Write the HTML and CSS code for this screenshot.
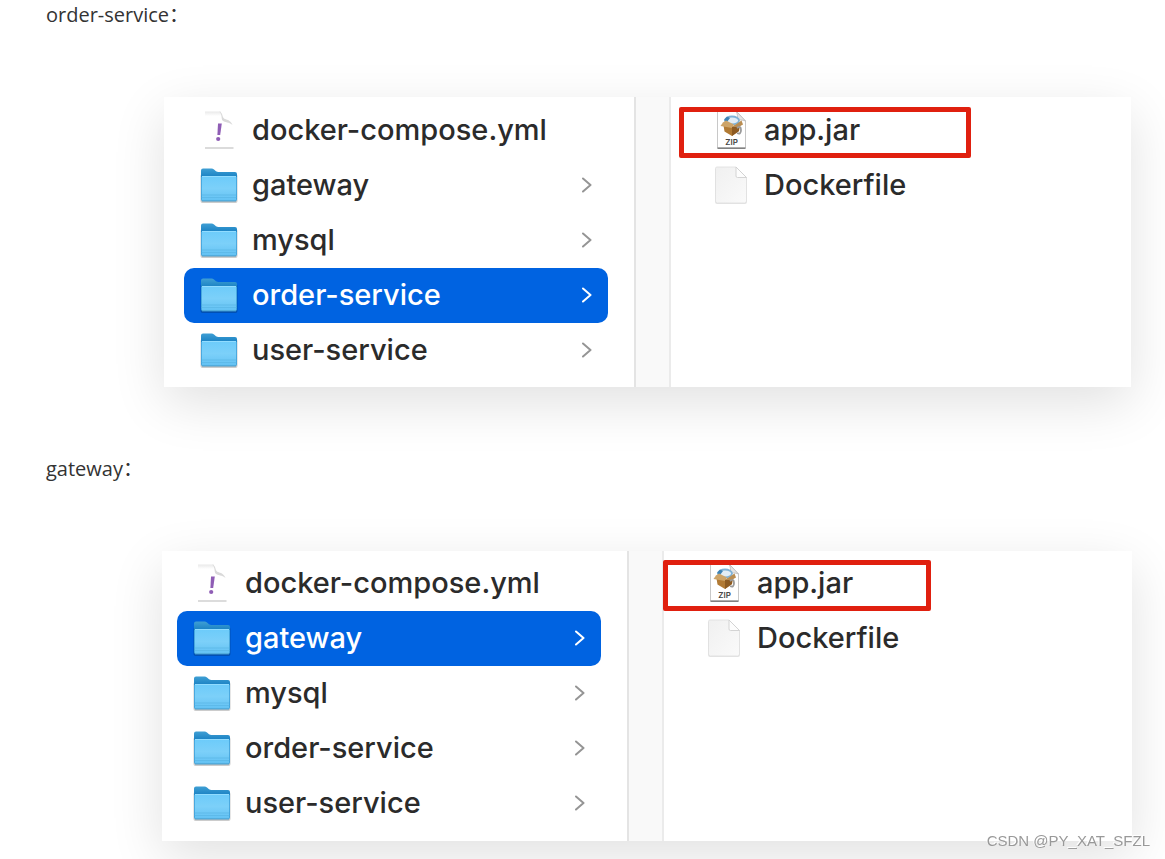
FILE: index.html
```
<!DOCTYPE html>
<html lang="zh-CN">
<head>
  <meta charset="UTF-8">
  <title>order-service / gateway</title>
  <meta name="viewport" content="width=device-width,initial-scale=1">
  <link rel="stylesheet" href="styles.css">
</head>
<body>
  <!-- shared icons -->
  <svg class="sprite" width="0" height="0" aria-hidden="true">
    <defs>
      <linearGradient id="folder-back" x1="0" y1="0" x2="0" y2="1">
        <stop offset="0" stop-color="#3f9fd4"/>
        <stop offset="0.25" stop-color="#1c83c4"/>
      </linearGradient>
      <linearGradient id="folder-front" x1="0" y1="0" x2="0" y2="1">
        <stop offset="0" stop-color="#6ccbfa"/>
        <stop offset="0.5" stop-color="#7cd0f9"/>
        <stop offset="1" stop-color="#62c1f3"/>
      </linearGradient>
      <linearGradient id="paper" x1="0" y1="0" x2="1" y2="1">
        <stop offset="0" stop-color="#f0f0f0"/>
        <stop offset="1" stop-color="#fafafa"/>
      </linearGradient>
      <linearGradient id="top-shade" x1="0" y1="0" x2="0" y2="1">
        <stop offset="0" stop-color="#e9e9e9"/>
        <stop offset="1" stop-color="#ffffff"/>
      </linearGradient>
    </defs>
    <symbol id="i-folder" viewBox="0 0 40 40">
      <rect x="0.500" y="9" width="37" height="29" rx="2" fill="#000" opacity="0.2"/>
      <path d="M1 5.500Q1 3.500 3 3.500H11.500Q13 3.500 14 4.500L16 6.200Q17 7 18.500 7H35Q37 7 37 9V34Q37 36 35 36H3Q1 36 1 34Z" fill="url(#folder-back)"/>
      <path d="M1.500 12.500Q1.500 11 3 11H35Q36.500 11 36.500 12.500V34.500Q36.500 36 35 36H3Q1.500 36 1.500 34.500Z" fill="url(#folder-front)"/>
      <path d="M2 11.500H36" stroke="#91dcff" stroke-width="1"/>
      <path d="M1.500 30H36.500M1.500 32.500H36.500" stroke="#55b2e3" stroke-width="0.600"/>
      <path d="M2 36H36" stroke="#4396c4" stroke-width="1"/>
    </symbol>
    <symbol id="i-yml" viewBox="0 0 40 40">
      <path d="M5 1H20L33 15V38H5Z" fill="#fff"/>
      <path d="M5 1.500H21V6H5Z" fill="url(#top-shade)"/>
      <path d="M19 1.500C23 2.500 22 7 24 8.500C26 10 30 9 32.500 15C29 11.500 25 13 22.500 10.500C21 9 22.500 4 19 1.500Z" fill="#d9d9d9"/>
      <path d="M5 38H33.500" stroke="#c4c4c4" stroke-width="1.200"/>
      <path d="M18 13.500L21.800 13.500L20.200 25H17.400Z" fill="#8f5db5"/>
      <circle cx="18.200" cy="29" r="2.100" fill="#8f5db5"/>
    </symbol>
    <symbol id="i-zip" viewBox="0 0 40 40">
      <path d="M5.500 1H24L33.500 11V38H5.500Z" fill="#fff" stroke="#c8c8c8" stroke-width="1"/>
      <path d="M24 1L33.500 11C30 9.500 27 10 25 10.500C26 7 25.500 4 24 1Z" fill="#e4e4e4" stroke="#b5b5b5" stroke-width="0.700"/>
      <path d="M5.500 38.200H33.500" stroke="#777" stroke-width="1.400"/>
      <ellipse cx="20" cy="10.500" rx="7" ry="4" fill="#e2edf5" stroke="#7fb2d6" stroke-width="1.800"/>
      <path d="M12 10L15 6.500L18 8L15 12Z" fill="#3e83b5"/>
      <path d="M11 12.500L20 16.500L29 12.500L27 21L20 26L12.500 21.500Z" fill="#b17a34"/>
      <path d="M11 12.500L14 10.500L22 14.500L20 18L8.500 16Z" fill="#cda468"/>
      <path d="M20 17L29.500 10.500L31 14.500L23 19Z" fill="#b98d52"/>
      <path d="M20 17V26L27 21V17Z" fill="#8d5b22"/>
      <path d="M25 18Q29 15 29 20T25 23" fill="none" stroke="#9a9a9a" stroke-width="1.800"/>
    </symbol>
    <symbol id="i-file" viewBox="0 0 40 40">
      <path d="M4.500 3H24L35 14V37Q35 39 33 39H5Q3 39 3 37V4.500Q3 3 4.500 3Z" fill="#000" opacity="0.1"/>
      <path d="M5 2H24L34.500 12.500V36Q34.500 38 32.500 38H5.500Q3.500 38 3.500 36V3.500Q3.500 2 5 2Z" fill="url(#paper)" stroke="#dedede" stroke-width="0.800"/>
      <path d="M24 2L34.500 12.500H25.500Q24 12.500 24 11Z" fill="#fdfdfd" stroke="#cfcfcf" stroke-width="0.900"/>
    </symbol>
    <symbol id="i-chevron" viewBox="0 0 10 16">
      <path d="M1 1.500L8.500 8L1 14.500" fill="none" stroke="currentColor" stroke-width="2" stroke-linecap="round" stroke-linejoin="round"/>
    </symbol>
  </svg>

  <main class="article">
    <section class="block">
      <p class="title">order-service：</p>
      <div class="finder finder-order">
        <div class="col">
          <button class="row"><svg class="icon"><use href="#i-yml"/></svg><span>docker-compose.yml</span></button>
          <button class="row"><svg class="icon"><use href="#i-folder"/></svg><span>gateway</span><svg class="chevron"><use href="#i-chevron"/></svg></button>
          <button class="row"><svg class="icon"><use href="#i-folder"/></svg><span>mysql</span><svg class="chevron"><use href="#i-chevron"/></svg></button>
          <button class="row selected"><svg class="icon"><use href="#i-folder"/></svg><span>order-service</span><svg class="chevron"><use href="#i-chevron"/></svg></button>
          <button class="row"><svg class="icon"><use href="#i-folder"/></svg><span>user-service</span><svg class="chevron"><use href="#i-chevron"/></svg></button>
        </div>
        <div class="divider"></div>
        <div class="col files">
          <button class="row marked"><svg class="icon" viewBox="0 0 40 40"><use href="#i-zip"/><text x="19.500" y="35.200" text-anchor="middle" class="zip-label">ZIP</text></svg><span>app.jar</span></button>
          <button class="row"><svg class="icon"><use href="#i-file"/></svg><span>Dockerfile</span></button>
        </div>
      </div>
    </section>

    <section class="block">
      <p class="title">gateway：</p>
      <div class="finder finder-gateway">
        <div class="col">
          <button class="row"><svg class="icon"><use href="#i-yml"/></svg><span>docker-compose.yml</span></button>
          <button class="row selected"><svg class="icon"><use href="#i-folder"/></svg><span>gateway</span><svg class="chevron"><use href="#i-chevron"/></svg></button>
          <button class="row"><svg class="icon"><use href="#i-folder"/></svg><span>mysql</span><svg class="chevron"><use href="#i-chevron"/></svg></button>
          <button class="row"><svg class="icon"><use href="#i-folder"/></svg><span>order-service</span><svg class="chevron"><use href="#i-chevron"/></svg></button>
          <button class="row"><svg class="icon"><use href="#i-folder"/></svg><span>user-service</span><svg class="chevron"><use href="#i-chevron"/></svg></button>
        </div>
        <div class="divider"></div>
        <div class="col files">
          <button class="row marked"><svg class="icon" viewBox="0 0 40 40"><use href="#i-zip"/><text x="19.500" y="35.200" text-anchor="middle" class="zip-label">ZIP</text></svg><span>app.jar</span></button>
          <button class="row"><svg class="icon"><use href="#i-file"/></svg><span>Dockerfile</span></button>
        </div>
      </div>
    </section>
  </main>
  <div class="watermark">CSDN @PY_XAT_SFZL</div>
</body>
</html>
```
FILE: styles.css
```
*, *::after {
  box-sizing: border-box;
}
body {
  margin: 0;
  background: #fff;
  color: #333;
  font-family: "Open Sans", "Noto Sans CJK SC", sans-serif;
}
.sprite {
  position: absolute;
}
.article {
  padding-bottom: 18px;
}
.block {
  margin-bottom: 67px;
}
.block:last-child {
  margin-bottom: 0;
}
.title {
  margin: 0 0 67px 46px;
  font-size: 20px;
  line-height: 30px;
}

/* file browser window */
.finder {
  display: grid;
  background: #fff;
  box-shadow: 0 16px 50px rgba(0, 0, 0, 0.12);
}
.finder-order {
  grid-template-columns: 470px 37px 1fr;
  margin: 0 34px 0 164px;
  padding: 6px 0 9px;
}
.finder-gateway {
  grid-template-columns: 465px 37px 1fr;
  margin: 0 33px 0 162px;
  padding: 5px 0 10px;
}
.col {
  padding: 0 26px 0 20px;
}
.finder-gateway .col {
  padding-left: 15px;
}
.divider {
  margin: -6px 0 -9px;
  background: #f9f9f9;
  border-left: 2px solid #e4e4e4;
  border-right: 2px solid #ebebeb;
}
.finder-gateway .divider {
  margin: -5px 0 -10px;
}
.finder .files {
  padding: 0;
}

.row {
  position: relative;
  display: flex;
  align-items: center;
  gap: 12px;
  width: 100%;
  height: 55px;
  padding: 0 16px 2px;
  border: 0;
  border-radius: 10px;
  background: none;
  color: #2b2b2b;
  font-family: Inter, sans-serif;
  font-size: 29px;
  font-weight: 500;
  text-align: left;
  cursor: pointer;
}
.files .row {
  padding-left: 41px;
}
.row.selected {
  background: #0063e1;
  color: #fff;
}
.icon {
  flex: none;
  width: 40px;
  height: 40px;
}
.chevron {
  width: 10px;
  height: 16px;
  margin-left: auto;
  color: #959595;
}
.selected .chevron {
  color: #fff;
}
.zip-label {
  font-family: Inter, sans-serif;
  font-size: 8px;
  font-weight: 600;
  fill: #444;
}

/* red frame over the jar */
.marked::after {
  content: "";
  position: absolute;
  top: 4px;
  left: 8px;
  width: 292px;
  height: 51px;
  border: 5px solid #e0200f;
  border-radius: 2px;
}
.finder-gateway .marked::after {
  left: -1px;
  width: 268px;
}

.watermark {
  position: fixed;
  right: 15px;
  bottom: 8px;
  color: #999;
  font-family: "Liberation Sans", sans-serif;
  font-size: 15px;
  line-height: 20px;
  text-shadow: -1px -1px 0 #fff;
}
```
